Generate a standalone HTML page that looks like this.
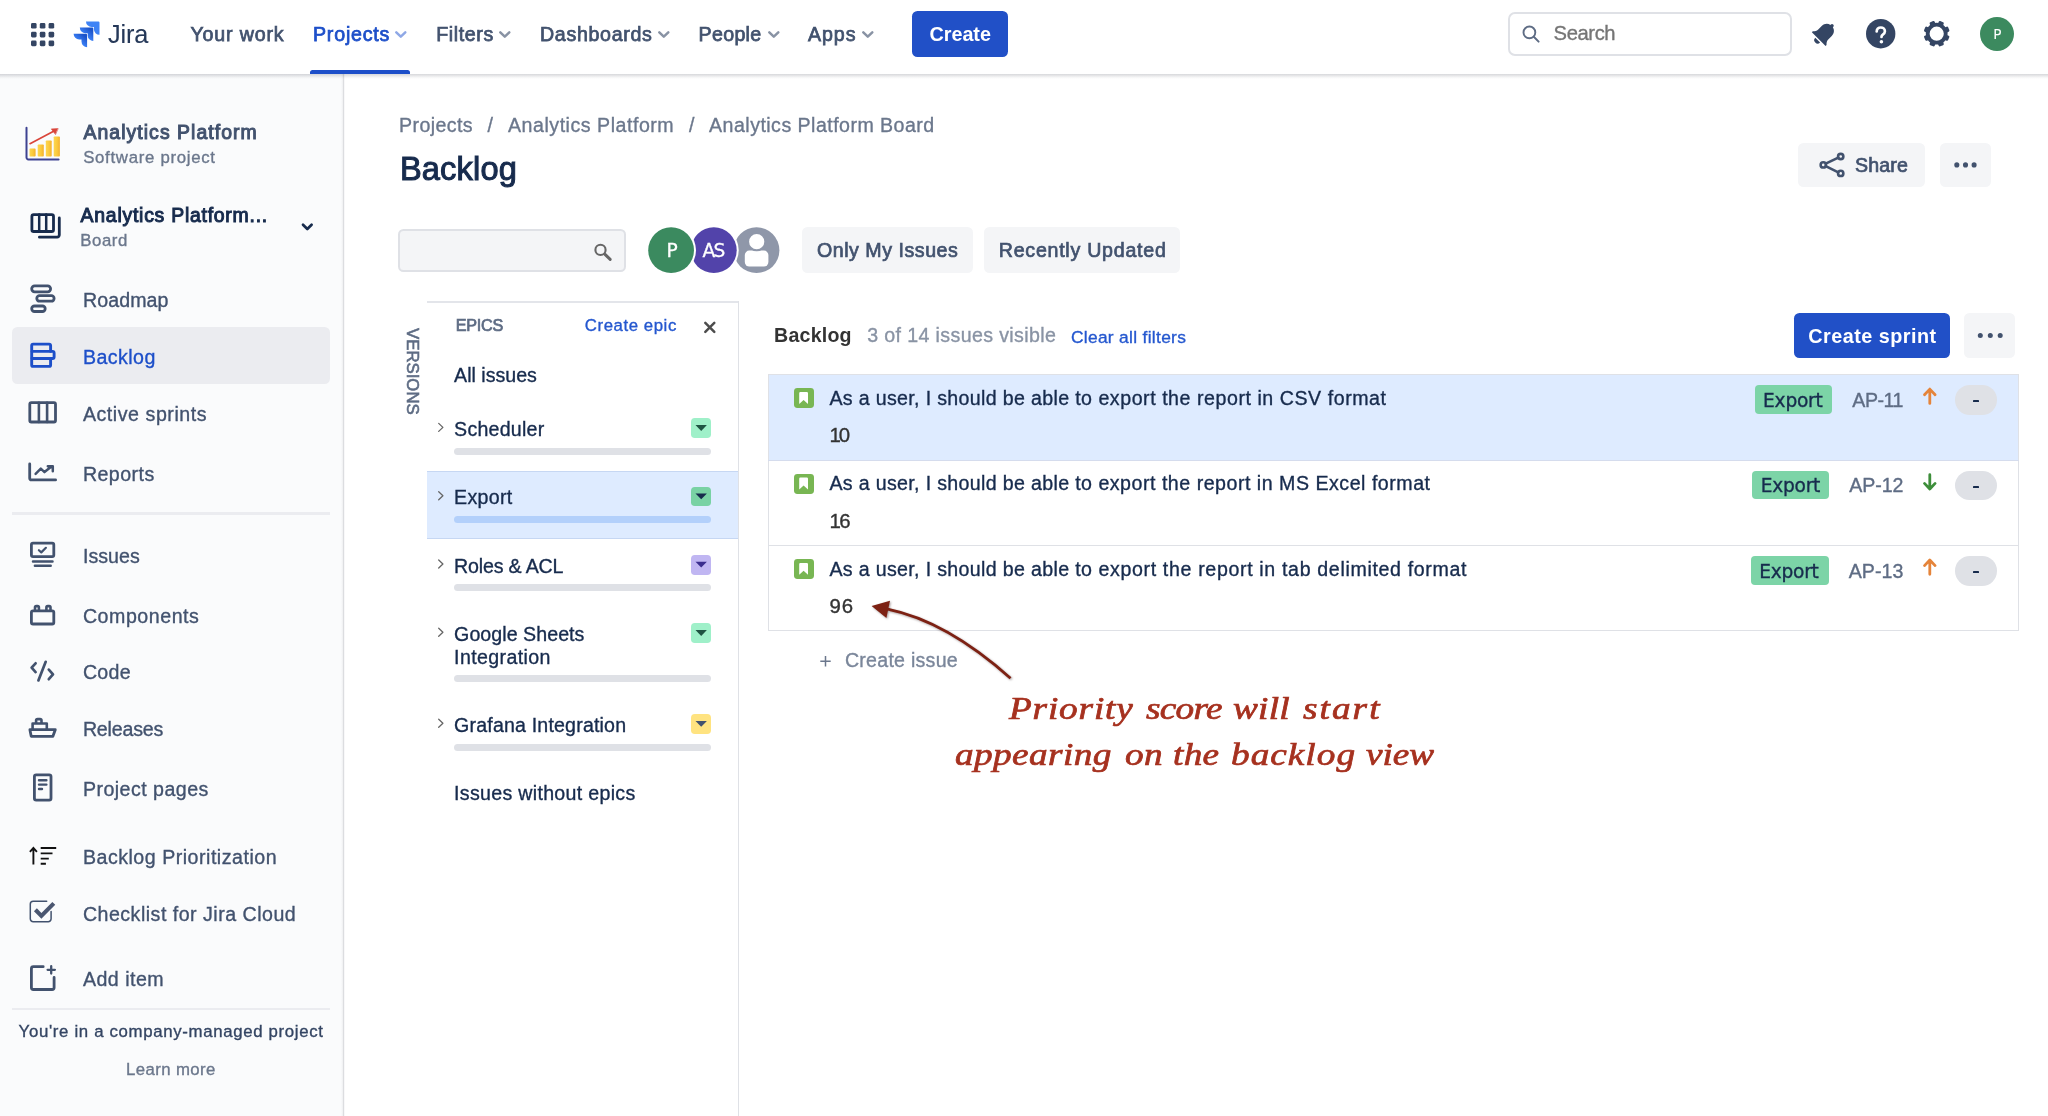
<!DOCTYPE html>
<html lang="en">
<head>
<meta charset="utf-8">
<title>Backlog - Analytics Platform - Jira</title>
<style>
*{box-sizing:border-box;margin:0;padding:0}
html,body{width:2048px;height:1116px;overflow:hidden;background:#fff}
body{font-family:"Liberation Sans",sans-serif;color:#172b4d;position:relative;font-size:20px}
.abs,.t{position:absolute;white-space:nowrap}
.t{line-height:1}
svg{position:absolute;overflow:visible}
#root{position:absolute;left:0;top:0;width:2048px;height:1116px;will-change:transform}
</style>
</head>
<body>
<div id="root">
<header id="top-navigation">
<div class="abs" style="left:0px;top:74px;width:343.2px;height:1042px;background:#fafbfc;"></div>
<div class="abs" style="left:340.8px;top:74px;width:2.2px;height:1042px;background:linear-gradient(90deg,rgba(40,40,50,0),rgba(40,40,50,.055));"></div>
<div class="abs" style="left:343px;top:74px;width:1.2px;height:1042px;background:#dcdde0;"></div>
<div class="abs" style="left:344.2px;top:74px;width:1.2px;height:1042px;background:rgba(40,40,50,.03);"></div>
<div class="abs" style="left:0px;top:74px;width:2048px;height:5px;background:linear-gradient(rgba(40,44,60,.19),rgba(40,44,60,.11) 35%,rgba(40,44,60,.035) 72%,rgba(40,44,60,0));"></div>
<div class="abs" style="left:0px;top:0px;width:2048px;height:74px;background:#fff;"></div>
<svg style="left:31px;top:22.8px" width="23.2" height="23.2" viewBox="0 0 23.2 23.2" fill="#344563"><rect x="0" y="0" width="5.6" height="5.6" rx="1.4"/><rect x="8.8" y="0" width="5.6" height="5.6" rx="1.4"/><rect x="17.6" y="0" width="5.6" height="5.6" rx="1.4"/><rect x="0" y="8.8" width="5.6" height="5.6" rx="1.4"/><rect x="8.8" y="8.8" width="5.6" height="5.6" rx="1.4"/><rect x="17.6" y="8.8" width="5.6" height="5.6" rx="1.4"/><rect x="0" y="17.6" width="5.6" height="5.6" rx="1.4"/><rect x="8.8" y="17.6" width="5.6" height="5.6" rx="1.4"/><rect x="17.6" y="17.6" width="5.6" height="5.6" rx="1.4"/></svg>
<svg style="left:72.9px;top:21px" width="26.6" height="26.4" viewBox="0 0 26.6 26.4" ><defs><linearGradient id="jg1" x1="0.9" y1="0.1" x2="0.45" y2="0.6"><stop offset="0.15" stop-color="#1c53c9"/><stop offset="1" stop-color="#3b80f6"/></linearGradient></defs>
<path d="M25.4 0.4H13.0a5.6 5.6 0 0 0 5.6 5.6h2.3v2.2a5.6 5.6 0 0 0 5.6 5.6V1.5a1.1 1.1 0 0 0-1.1-1.1z" fill="#3f83f5"/>
<path d="M19.2 6.6H6.8a5.6 5.6 0 0 0 5.6 5.6h2.3v2.2a5.6 5.6 0 0 0 5.6 5.6V7.7a1.1 1.1 0 0 0-1.1-1.1z" fill="url(#jg1)"/>
<path d="M13.0 12.8H0.6a5.6 5.6 0 0 0 5.6 5.6h2.3v2.2a5.6 5.6 0 0 0 5.6 5.6V13.9a1.1 1.1 0 0 0-1.1-1.1z" fill="url(#jg1)"/></svg>
<div class="t" style="left:108px;top:22.00px;font-size:25.3px;letter-spacing:-0.155px;color:#253858;-webkit-text-stroke-width:0.1px;">Jira</div>
<div class="t" style="left:190.5px;top:25.00px;font-size:19.6px;letter-spacing:0.837px;color:#42526e;-webkit-text-stroke-width:0.75px;">Your work</div>
<div class="t" style="left:313px;top:25.00px;font-size:19.6px;letter-spacing:0.803px;color:#1d4fc9;-webkit-text-stroke-width:0.75px;">Projects</div>
<svg style="left:395.4px;top:31.2px" width="11.6" height="7" viewBox="0 0 11.6 7" ><path d="M1.3 1.3L5.8 5.6L10.3 1.3" fill="none" stroke="#8fa8e6" stroke-width="2.5" stroke-linecap="round" stroke-linejoin="round"/></svg>
<div class="t" style="left:436.2px;top:25.00px;font-size:19.6px;letter-spacing:0.609px;color:#42526e;-webkit-text-stroke-width:0.75px;">Filters</div>
<svg style="left:499.3px;top:31.2px" width="11.6" height="7" viewBox="0 0 11.6 7" ><path d="M1.3 1.3L5.8 5.6L10.3 1.3" fill="none" stroke="#8993a4" stroke-width="2.5" stroke-linecap="round" stroke-linejoin="round"/></svg>
<div class="t" style="left:540px;top:25.00px;font-size:19.6px;letter-spacing:0.683px;color:#42526e;-webkit-text-stroke-width:0.75px;">Dashboards</div>
<svg style="left:658.3px;top:31.2px" width="11.6" height="7" viewBox="0 0 11.6 7" ><path d="M1.3 1.3L5.8 5.6L10.3 1.3" fill="none" stroke="#8993a4" stroke-width="2.5" stroke-linecap="round" stroke-linejoin="round"/></svg>
<div class="t" style="left:698.6px;top:25.00px;font-size:19.6px;letter-spacing:0.317px;color:#42526e;-webkit-text-stroke-width:0.75px;">People</div>
<svg style="left:767.9px;top:31.2px" width="11.6" height="7" viewBox="0 0 11.6 7" ><path d="M1.3 1.3L5.8 5.6L10.3 1.3" fill="none" stroke="#8993a4" stroke-width="2.5" stroke-linecap="round" stroke-linejoin="round"/></svg>
<div class="t" style="left:808px;top:25.00px;font-size:19.6px;letter-spacing:0.943px;color:#42526e;-webkit-text-stroke-width:0.75px;">Apps</div>
<svg style="left:861.9px;top:31.2px" width="11.6" height="7" viewBox="0 0 11.6 7" ><path d="M1.3 1.3L5.8 5.6L10.3 1.3" fill="none" stroke="#8993a4" stroke-width="2.5" stroke-linecap="round" stroke-linejoin="round"/></svg>
<div class="abs" style="left:310px;top:69.7px;width:99.5px;height:4.3px;background:#1d4fc9;border-radius:2.5px 2.5px 0 0;"></div>
<div class="abs" style="left:911.8px;top:11.4px;width:96.3px;height:45.3px;background:#2150c7;border-radius:5.5px;"></div>
<div class="t" style="left:929.5px;top:25.00px;font-size:19.8px;font-weight:700;letter-spacing:-0.036px;color:#fff;">Create</div>
<div class="abs" style="left:1508px;top:11.7px;width:283.5px;height:44px;border:2px solid #dfe1e6;border-radius:7px;background:#fff"></div>
<svg style="left:1521.6px;top:24.8px" width="18" height="18" viewBox="0 0 18 18" ><circle cx="7.4" cy="7.4" r="5.9" fill="none" stroke="#5e6c84" stroke-width="1.9"/><path d="M11.8 11.8L16.6 16.6" stroke="#5e6c84" stroke-width="2" stroke-linecap="round"/></svg>
<div class="t" style="left:1553.6px;top:23.00px;font-size:20.2px;letter-spacing:-0.394px;color:#757575;-webkit-text-stroke-width:0.35px;">Search</div>
<svg style="left:0;top:0" width="2048" height="74"><g transform="translate(1824.600 33.200) rotate(45)" fill="#344563"><path d="M0 -12.2a1.7 1.7 0 0 1 1.7 1.7v.5c3.400 .8 5.400 3.700 5.400 7v5.300c0 1.700 .9 3 2.600 4.700v1.300h-19.400v-1.300c1.700-1.700 2.600-3 2.600-4.700v-5.300c0-3.300 2-6.200 5.400-7v-.5a1.700 1.700 0 0 1 1.700-1.700z"/><path d="M-3.400 9.800h6.800a3.400 3.400 0 0 1-6.800 0z"/></g></svg>
<svg style="left:1865.6px;top:19.2px" width="29.4" height="29.4" viewBox="0 0 29.4 29.4" ><circle cx="14.7" cy="14.7" r="14.7" fill="#344563"/><path d="M10.700 12.400c0-2.300 1.800-3.900 4.100-3.900s4.100 1.500 4.100 3.700c0 1.700-.9 2.600-2.100 3.400-1 .7-1.300 1.100-1.300 2.400" fill="none" stroke="#fff" stroke-width="2.700" stroke-linecap="round"/><circle cx="15.400" cy="22.700" r="1.800" fill="#fff"/></svg>
<svg style="left:0;top:0" width="2048" height="74"><g transform="translate(1936.7 33.700)"><g fill="#344563"><rect x="-2.7" y="-13" width="5.400" height="5" rx="1.2" transform="rotate(22.5)"/><rect x="-2.7" y="-13" width="5.400" height="5" rx="1.2" transform="rotate(67.5)"/><rect x="-2.7" y="-13" width="5.400" height="5" rx="1.2" transform="rotate(112.5)"/><rect x="-2.7" y="-13" width="5.400" height="5" rx="1.2" transform="rotate(157.5)"/><rect x="-2.7" y="-13" width="5.400" height="5" rx="1.2" transform="rotate(202.5)"/><rect x="-2.7" y="-13" width="5.400" height="5" rx="1.2" transform="rotate(247.5)"/><rect x="-2.7" y="-13" width="5.400" height="5" rx="1.2" transform="rotate(292.5)"/><rect x="-2.7" y="-13" width="5.400" height="5" rx="1.2" transform="rotate(337.5)"/></g><circle r="9" fill="none" stroke="#344563" stroke-width="3.800"/></g></svg>
<div class="abs" style="left:1979.8px;top:17px;width:34.3px;height:34.3px;border-radius:50%;background:#3c8a5f"></div>
<div class="t" style="left:1993.3px;top:28.00px;font-size:13.6px;font-family:'DejaVu Sans',sans-serif;color:#fff;-webkit-text-stroke-width:0.05px;">P</div>
</header>
<aside id="project-sidebar">
<svg style="left:0;top:0" width="344" height="1116" fill="none" stroke="#42526e" stroke-width="2.8" stroke-linecap="round" stroke-linejoin="round"><defs><linearGradient id="yb" x1="0" y1="0" x2="1" y2="0"><stop offset="0" stop-color="#fcd650"/><stop offset="0.55" stop-color="#fbc93c"/><stop offset="1" stop-color="#f3b02e"/></linearGradient></defs>
<path d="M26.500 127.800V157.500a1.900 1.900 0 0 0 1.900 1.900H58.600" stroke="#3d4291" stroke-width="2"/>
<g fill="url(#yb)" stroke="none"><rect x="29.500" y="148.600" width="6.100" height="7.900" rx=".8"/><rect x="37.700" y="144.400" width="6.100" height="12.100" rx=".8"/><rect x="45.800" y="140.400" width="5.900" height="16.100" rx=".8"/><rect x="53.700" y="136.500" width="6.200" height="20" rx=".8"/></g>
<path d="M30 143.700L55 130.600" stroke="#d9453a" stroke-width="1.700"/><path d="M57.800 128.600L51.300 128.900L55.300 134.300z" fill="#d9453a" stroke="#d9453a" stroke-width=".6"/></svg>
<div class="t" style="left:83.5px;top:123.00px;font-size:19.4px;letter-spacing:1.060px;color:#42526e;-webkit-text-stroke-width:1px;">Analytics Platform</div>
<div class="t" style="left:83.2px;top:150.00px;font-size:16.8px;letter-spacing:0.702px;color:#6b778c;-webkit-text-stroke-width:0.35px;">Software project</div>
<svg style="left:0;top:0" width="344" height="1116" fill="none" stroke="#172b4d" stroke-width="2.8" stroke-linecap="round" stroke-linejoin="round"><rect x="31.900" y="214.600" width="21.600" height="16.900" rx="1.800"/><path d="M39.200 214.600v16.900M46.200 214.600v16.900" stroke-width="2.500"/><path d="M59.300 218v17.100a2.100 2.100 0 0 1-2.100 2.100H39.400"/></svg>
<div class="t" style="left:80.6px;top:206.00px;font-size:19.4px;letter-spacing:0.763px;color:#172b4d;-webkit-text-stroke-width:1px;">Analytics Platform...</div>
<div class="t" style="left:80.3px;top:233.00px;font-size:16.8px;letter-spacing:0.555px;color:#6b778c;-webkit-text-stroke-width:0.35px;">Board</div>
<svg style="left:0;top:0" width="344" height="1116" fill="none" stroke="#172b4d" stroke-width="2.7" stroke-linecap="round" stroke-linejoin="round"><path d="M303 224.700l4.300 4.300 4.300-4.300"/></svg>
<div class="abs" style="left:11.6px;top:327.1px;width:318.2px;height:56.5px;background:#ebecf0;border-radius:5.5px;"></div>
<svg style="left:0;top:0" width="344" height="1116" fill="none" stroke="#42526e" stroke-width="2.8" stroke-linecap="round" stroke-linejoin="round"><rect x="31.700" y="285.900" width="18.900" height="5.900" rx="2.950"/><rect x="36.800" y="295.700" width="17.300" height="5.500" rx="2.750"/><rect x="31.700" y="306" width="13.500" height="5.500" rx="2.750"/></svg>
<div class="t" style="left:82.9px;top:291.00px;font-size:19.6px;letter-spacing:0.105px;color:#42526e;-webkit-text-stroke-width:0.35px;">Roadmap</div>
<svg style="left:0;top:0" width="344" height="1116" fill="none" stroke="#1d4fc9" stroke-width="2.9" stroke-linecap="round" stroke-linejoin="round"><path d="M31.700 351.400V345.600a1.500 1.500 0 0 1 1.500-1.500H49.100a1.500 1.500 0 0 1 1.500 1.500V351.400M31.700 358.500V364.900a1.500 1.500 0 0 0 1.500 1.500H49.100a1.500 1.500 0 0 0 1.500-1.500V358.500"/><rect x="31.700" y="351.400" width="22.400" height="7.100" rx="1.500"/></svg>
<div class="t" style="left:82.9px;top:348.00px;font-size:19.6px;letter-spacing:0.447px;color:#1d4fc9;-webkit-text-stroke-width:0.35px;">Backlog</div>
<svg style="left:0;top:0" width="344" height="1116" fill="none" stroke="#42526e" stroke-width="2.8" stroke-linecap="round" stroke-linejoin="round"><rect x="29.800" y="402.700" width="25.700" height="19.300" rx="1.500"/><path d="M38.900 402.700v19.300M47.100 402.700v19.300" stroke-width="2.600"/></svg>
<div class="t" style="left:82.9px;top:405.00px;font-size:19.6px;letter-spacing:0.553px;color:#42526e;-webkit-text-stroke-width:0.35px;">Active sprints</div>
<svg style="left:0;top:0" width="344" height="1116" fill="none" stroke="#42526e" stroke-width="2.8" stroke-linecap="round" stroke-linejoin="round"><path d="M29.700 464v14.200a1.700 1.700 0 0 0 1.700 1.700h24.200"/><path d="M35.600 473.800l5.200-5.200 3.700 3.500 7.300-5.800M47.800 466.300h5v5" stroke-width="2.500"/></svg>
<div class="t" style="left:82.9px;top:465.00px;font-size:19.6px;letter-spacing:0.448px;color:#42526e;-webkit-text-stroke-width:0.35px;">Reports</div>
<div class="abs" style="left:11.6px;top:512.4px;width:318.2px;height:2.2px;background:#ebecf0;"></div>
<svg style="left:0;top:0" width="344" height="1116" fill="none" stroke="#42526e" stroke-width="2.8" stroke-linecap="round" stroke-linejoin="round"><rect x="31.400" y="543.200" width="22.400" height="13.400" rx="1.600"/><path d="M38.900 550.200l2.400 2.200 4.600-4.600" stroke-width="2.200"/><path d="M33 561.500h19.500M34.900 565.700h15.800" stroke-width="2.500"/></svg>
<div class="t" style="left:82.9px;top:547.00px;font-size:19.6px;letter-spacing:0.052px;color:#42526e;-webkit-text-stroke-width:0.35px;">Issues</div>
<svg style="left:0;top:0" width="344" height="1116" fill="none" stroke="#42526e" stroke-width="2.8" stroke-linecap="round" stroke-linejoin="round"><rect x="31.400" y="610.800" width="22.400" height="13.200" rx="1.600"/><path d="M35 610.600v-3.200a1.300 1.300 0 0 1 1.300-1.300h1.300a1.300 1.300 0 0 1 1.300 1.300v3.200M46.400 610.600v-3.200a1.300 1.300 0 0 1 1.300-1.300h1.500a1.300 1.300 0 0 1 1.300 1.300v3.200" stroke-width="2.600"/></svg>
<div class="t" style="left:82.9px;top:607.00px;font-size:19.6px;letter-spacing:0.543px;color:#42526e;-webkit-text-stroke-width:0.35px;">Components</div>
<svg style="left:0;top:0" width="344" height="1116" fill="none" stroke="#42526e" stroke-width="2.8" stroke-linecap="round" stroke-linejoin="round"><path d="M35.600 663.300l-4 4.400 4 4.400M48.800 669.600l4.200 4.800-4.200 4.800M45.700 661.800l-7.300 18.600" stroke-width="2.700"/></svg>
<div class="t" style="left:82.9px;top:663.00px;font-size:19.6px;letter-spacing:0.285px;color:#42526e;-webkit-text-stroke-width:0.35px;">Code</div>
<svg style="left:0;top:0" width="344" height="1116" fill="none" stroke="#42526e" stroke-width="2.8" stroke-linecap="round" stroke-linejoin="round"><path d="M29.900 729.700h25.400l-2.400 6.600H31.200z"/><path d="M32.600 729.500v-6h14.200v6M36.100 723.300v-2.700a1.500 1.500 0 0 1 1.500-1.500h2.400a1.500 1.500 0 0 1 1.500 1.500v2.700" stroke-width="2.600"/></svg>
<div class="t" style="left:82.9px;top:720.00px;font-size:19.6px;letter-spacing:-0.170px;color:#42526e;-webkit-text-stroke-width:0.35px;">Releases</div>
<svg style="left:0;top:0" width="344" height="1116" fill="none" stroke="#42526e" stroke-width="2.8" stroke-linecap="round" stroke-linejoin="round"><rect x="34.400" y="774.800" width="16.600" height="25.300" rx="1.800"/><path d="M39 780.300h7.400M39 784.600h7.400M39 789h3" stroke-width="2.400"/></svg>
<div class="t" style="left:82.9px;top:780.00px;font-size:19.6px;letter-spacing:0.466px;color:#42526e;-webkit-text-stroke-width:0.35px;">Project pages</div>
<svg style="left:0;top:0" width="344" height="1116" fill="none" stroke="#111" stroke-width="1.9" stroke-linecap="round" stroke-linejoin="round"><path d="M33.400 848.300v16.200M29.900 851.800l3.500-3.900 3.500 3.900" stroke-linecap="butt" stroke-linejoin="miter"/><path d="M40.700 848h15.500M40.700 853.400h11.800M40.700 858.600h8.100M40.700 863.800h5.200" stroke-linecap="butt"/></svg>
<div class="t" style="left:82.9px;top:848.00px;font-size:19.6px;letter-spacing:0.511px;color:#42526e;-webkit-text-stroke-width:0.35px;">Backlog Prioritization</div>
<svg style="left:0;top:0" width="344" height="1116" fill="none" stroke="#42526e" stroke-width="2.8" stroke-linecap="round" stroke-linejoin="round"><path d="M51.100 911.500v7.300a2.900 2.900 0 0 1-2.900 2.900H33.200a2.900 2.900 0 0 1-2.900-2.900V904.100a2.900 2.900 0 0 1 2.900-2.900h13.500" stroke-width="1.500"/><path d="M35.400 909.800l6 6.100 12.400-12.500" stroke-width="4.100" stroke-linejoin="miter" stroke-linecap="butt" stroke="#4a5670"/></svg>
<div class="t" style="left:82.9px;top:905.00px;font-size:19.6px;letter-spacing:0.493px;color:#42526e;-webkit-text-stroke-width:0.35px;">Checklist for Jira Cloud</div>
<svg style="left:0;top:0" width="344" height="1116" fill="none" stroke="#42526e" stroke-width="2.8" stroke-linecap="round" stroke-linejoin="round"><path d="M54.100 977.500v10a2 2 0 0 1-2 2H33.400a2 2 0 0 1-2-2V968.700a2 2 0 0 1 2-2h9.800"/><path d="M51.200 966.200v7.300M47.600 969.800h7.300" stroke-width="2.300"/></svg>
<div class="t" style="left:82.9px;top:970.00px;font-size:19.6px;letter-spacing:0.482px;color:#42526e;-webkit-text-stroke-width:0.35px;">Add item</div>
<div class="abs" style="left:11.6px;top:1007.5px;width:318.2px;height:2.1px;background:#ebecf0;"></div>
<div class="t" style="left:18.6px;top:1024.00px;font-size:16.8px;letter-spacing:0.673px;color:#344563;-webkit-text-stroke-width:0.35px;">You're in a company-managed project</div>
<div class="t" style="left:126px;top:1062.00px;font-size:16.8px;letter-spacing:0.386px;color:#6b778c;-webkit-text-stroke-width:0.35px;">Learn more</div>
</aside>
<section id="page-header">
<div class="t" style="left:399px;top:116.00px;font-size:19.6px;letter-spacing:0.403px;color:#6b778c;-webkit-text-stroke-width:0.35px;">Projects</div>
<div class="t" style="left:487.6px;top:116.00px;font-size:19.6px;color:#6b778c;-webkit-text-stroke-width:0.35px;">/</div>
<div class="t" style="left:508px;top:116.00px;font-size:19.6px;letter-spacing:0.523px;color:#6b778c;-webkit-text-stroke-width:0.35px;">Analytics Platform</div>
<div class="t" style="left:688.9px;top:116.00px;font-size:19.6px;color:#6b778c;-webkit-text-stroke-width:0.35px;">/</div>
<div class="t" style="left:709.1px;top:116.00px;font-size:19.6px;letter-spacing:0.460px;color:#6b778c;-webkit-text-stroke-width:0.35px;">Analytics Platform Board</div>
<div class="t" style="left:399.9px;top:153.00px;font-size:32.6px;letter-spacing:0.182px;color:#172b4d;-webkit-text-stroke-width:1.05px;">Backlog</div>
<div class="abs" style="left:1798px;top:142.5px;width:127.4px;height:44.8px;background:#f4f5f7;border-radius:5.5px;"></div>
<svg style="left:0;top:0" width="2048" height="300" fill="none" stroke="#42526e" stroke-width="2.600" stroke-linecap="round"><path d="M1825.700 163.700L1838.300 157.600M1825.700 166.100L1838.300 172.300"/><circle cx="1823.300" cy="164.900" r="2.650"/><circle cx="1840.700" cy="156.500" r="2.650"/><circle cx="1840.700" cy="173.400" r="2.650"/></svg>
<div class="t" style="left:1855px;top:156.00px;font-size:19.6px;letter-spacing:0.151px;color:#42526e;-webkit-text-stroke-width:0.7px;">Share</div>
<div class="abs" style="left:1940.1px;top:142.5px;width:51.1px;height:44.8px;background:#f4f5f7;border-radius:5.5px;"></div>
<svg style="left:0;top:0" width="2048" height="300" fill="#42526e"><circle cx="1956.800" cy="164.900" r="2.550"/><circle cx="1965.500" cy="164.900" r="2.550"/><circle cx="1974.100" cy="164.900" r="2.550"/></svg>
<div class="abs" style="left:398.400px;top:229px;width:227.200px;height:42.500px;border:2px solid #dfe1e6;border-radius:5.500px;background:#f4f5f7"></div>
<svg style="left:0;top:0" width="2048" height="300" fill="none" stroke="#666" stroke-linecap="round"><circle cx="600.500" cy="249.900" r="5.100" stroke-width="2.100"/><path d="M605 254.400L610.200 259.400" stroke-width="3"/></svg>
<svg style="left:0;top:0" width="2048" height="300"><circle cx="756.500" cy="250.200" r="22.900" fill="#8f97a9"/><rect x="744.800" y="250.600" width="23.600" height="16" rx="4.500" fill="#fff"/><circle cx="756.700" cy="241.700" r="8.600" fill="#fff" stroke="#8f97a9" stroke-width="2"/><circle cx="713.800" cy="250.200" r="24.900" fill="#fff"/><circle cx="713.800" cy="250.200" r="22.900" fill="#5243aa"/><circle cx="671.100" cy="250.200" r="24.900" fill="#fff"/><circle cx="671.100" cy="250.200" r="22.900" fill="#3b8a5f"/></svg>
<div class="t" style="left:666.4px;top:242.00px;font-size:18.6px;font-family:'DejaVu Sans',sans-serif;color:#fff;-webkit-text-stroke-width:0.3px;">P</div>
<div class="t" style="left:702.5px;top:242.00px;font-size:18.6px;font-family:'DejaVu Sans',sans-serif;letter-spacing:-1.731px;color:#fff;-webkit-text-stroke-width:0.3px;">AS</div>
<div class="abs" style="left:802px;top:227.4px;width:170.8px;height:45.7px;background:#f4f5f7;border-radius:5.5px;"></div>
<div class="t" style="left:817px;top:241.00px;font-size:19.6px;letter-spacing:0.528px;color:#42526e;-webkit-text-stroke-width:0.7px;">Only My Issues</div>
<div class="abs" style="left:984.2px;top:227.4px;width:195.8px;height:45.7px;background:#f4f5f7;border-radius:5.5px;"></div>
<div class="t" style="left:998.8px;top:241.00px;font-size:19.6px;letter-spacing:0.749px;color:#42526e;-webkit-text-stroke-width:0.7px;">Recently Updated</div>
</section>
<section id="epics-panel">
<div class="abs" style="left:426.8px;top:300.9px;width:312.7px;height:1.8px;background:#e3e5ea;"></div>
<div class="abs" style="left:737.6px;top:300.8px;width:1.9px;height:815.2px;background:#dfe1e6;"></div>
<div class="t" style="left:419.600px;top:327.600px;font-size:16.800px;letter-spacing:0;color:#5e6c84;-webkit-text-stroke-width:.6px;transform-origin:0 0;transform:rotate(90deg)">VERSIONS</div>
<div class="t" style="left:455.8px;top:317.00px;font-size:16.2px;letter-spacing:-0.273px;color:#5e6c84;-webkit-text-stroke-width:0.7px;">EPICS</div>
<div class="t" style="left:584.8px;top:318.00px;font-size:16.8px;letter-spacing:0.567px;color:#2457cf;-webkit-text-stroke-width:0.35px;">Create epic</div>
<svg style="left:0;top:0" width="2048" height="400" fill="none" stroke="#4d4d4d" stroke-width="2.500" stroke-linecap="round"><path d="M705.300 322.800L714.300 331.800M714.300 322.800L705.300 331.800"/></svg>
<div class="t" style="left:454.1px;top:366.00px;font-size:19.6px;letter-spacing:0.004px;color:#172b4d;-webkit-text-stroke-width:0.35px;">All issues</div>
<svg style="left:0;top:0" width="2048" height="900" fill="none" stroke="#666" stroke-width="1.300" stroke-linecap="round" stroke-linejoin="round"><path d="M438.700 423.4L442.900 427.4L438.700 431.4"/></svg>
<div class="t" style="left:454.1px;top:420.00px;font-size:19.6px;letter-spacing:0.233px;color:#172b4d;-webkit-text-stroke-width:0.35px;">Scheduler</div>
<div class="abs" style="left:690.8px;top:418.3px;width:20.6px;height:19.8px;background:#9ff0c9;border-radius:3.8px;"></div>
<svg style="left:0;top:0" width="2048" height="900"><path d="M695.500 425.1h11.400l-5.700 5.900z" fill="#1f5443"/></svg>
<div class="abs" style="left:453.6px;top:447.8px;width:257.8px;height:7.1px;background:#dfe1e6;border-radius:3.6px;"></div>
<div class="abs" style="left:426.8px;top:471px;width:311px;height:67.6px;background:#deebff;border-top:1.500px solid #c6d7f3;border-bottom:1.500px solid #c6d7f3;"></div>
<svg style="left:0;top:0" width="2048" height="900" fill="none" stroke="#666" stroke-width="1.300" stroke-linecap="round" stroke-linejoin="round"><path d="M438.700 491.7L442.900 495.7L438.700 499.7"/></svg>
<div class="t" style="left:454.1px;top:488.00px;font-size:19.6px;letter-spacing:0.292px;color:#172b4d;-webkit-text-stroke-width:0.35px;">Export</div>
<div class="abs" style="left:690.8px;top:486.6px;width:20.6px;height:19.8px;background:#79d2a4;border-radius:3.8px;"></div>
<svg style="left:0;top:0" width="2048" height="900"><path d="M695.500 493.4h11.400l-5.700 5.900z" fill="#172b4d"/></svg>
<div class="abs" style="left:453.6px;top:516px;width:257.8px;height:7.1px;background:#b3d0fb;border-radius:3.6px;"></div>
<svg style="left:0;top:0" width="2048" height="900" fill="none" stroke="#666" stroke-width="1.300" stroke-linecap="round" stroke-linejoin="round"><path d="M438.700 560.0L442.900 564.0L438.700 568.0"/></svg>
<div class="t" style="left:454.1px;top:557.00px;font-size:19.6px;letter-spacing:-0.179px;color:#172b4d;-webkit-text-stroke-width:0.35px;">Roles &amp; ACL</div>
<div class="abs" style="left:690.8px;top:554.9px;width:20.6px;height:19.8px;background:#c0b6f2;border-radius:3.8px;"></div>
<svg style="left:0;top:0" width="2048" height="900"><path d="M695.500 561.7h11.400l-5.700 5.900z" fill="#3b2e8f"/></svg>
<div class="abs" style="left:453.6px;top:584.3px;width:257.8px;height:7.1px;background:#dfe1e6;border-radius:3.6px;"></div>
<svg style="left:0;top:0" width="2048" height="900" fill="none" stroke="#666" stroke-width="1.300" stroke-linecap="round" stroke-linejoin="round"><path d="M438.700 628.3L442.900 632.3L438.700 636.3"/></svg>
<div class="t" style="left:454.1px;top:625.00px;font-size:19.6px;letter-spacing:0.055px;color:#172b4d;-webkit-text-stroke-width:0.35px;">Google Sheets</div>
<div class="t" style="left:454.1px;top:648.00px;font-size:19.6px;letter-spacing:0.381px;color:#172b4d;-webkit-text-stroke-width:0.35px;">Integration</div>
<div class="abs" style="left:690.8px;top:623.2px;width:20.6px;height:19.8px;background:#9ff0c9;border-radius:3.8px;"></div>
<svg style="left:0;top:0" width="2048" height="900"><path d="M695.500 630.0h11.400l-5.700 5.900z" fill="#1f5443"/></svg>
<div class="abs" style="left:453.6px;top:675.2px;width:257.8px;height:7.1px;background:#dfe1e6;border-radius:3.6px;"></div>
<svg style="left:0;top:0" width="2048" height="900" fill="none" stroke="#666" stroke-width="1.300" stroke-linecap="round" stroke-linejoin="round"><path d="M438.700 719.2L442.900 723.2L438.700 727.2"/></svg>
<div class="t" style="left:454.1px;top:716.00px;font-size:19.6px;letter-spacing:0.175px;color:#172b4d;-webkit-text-stroke-width:0.35px;">Grafana Integration</div>
<div class="abs" style="left:690.8px;top:714.1px;width:20.6px;height:19.8px;background:#ffe380;border-radius:3.8px;"></div>
<svg style="left:0;top:0" width="2048" height="900"><path d="M695.500 720.9h11.400l-5.700 5.900z" fill="#42526e"/></svg>
<div class="abs" style="left:453.6px;top:743.8px;width:257.8px;height:7.1px;background:#dfe1e6;border-radius:3.6px;"></div>
<div class="t" style="left:454.1px;top:784.00px;font-size:19.6px;letter-spacing:0.303px;color:#172b4d;-webkit-text-stroke-width:0.35px;">Issues without epics</div>
</section>
<main id="backlog-list">
<div class="t" style="left:774.1px;top:326.00px;font-size:19.6px;font-weight:700;letter-spacing:0.211px;color:#333;">Backlog</div>
<div class="t" style="left:867.2px;top:326.00px;font-size:19.6px;letter-spacing:0.376px;color:#8993a4;-webkit-text-stroke-width:0.35px;">3 of 14 issues visible</div>
<div class="t" style="left:1070.9px;top:329.00px;font-size:17.4px;letter-spacing:0.302px;color:#2457cf;-webkit-text-stroke-width:0.35px;">Clear all filters</div>
<div class="abs" style="left:1793.5px;top:312.8px;width:156.3px;height:45.1px;background:#2150c7;border-radius:5.5px;"></div>
<div class="t" style="left:1808.2px;top:327.00px;font-size:19.8px;font-weight:700;letter-spacing:0.489px;color:#fff;">Create sprint</div>
<div class="abs" style="left:1964.2px;top:312.8px;width:50.5px;height:45.1px;background:#f4f5f7;border-radius:5.5px;"></div>
<svg style="left:0;top:0" width="2048" height="400" fill="#42526e"><circle cx="1980.300" cy="335.600" r="2.500"/><circle cx="1990.300" cy="335.600" r="2.500"/><circle cx="2000.200" cy="335.600" r="2.500"/></svg>
<div class="abs" style="left:768px;top:374.4px;width:1251.2px;height:86.2px;background:#deebff;"></div>
<div class="abs" style="left:768px;top:373.800px;width:1251.200px;height:257.300px;border:1.500px solid #dfe1e6"></div>
<div class="abs" style="left:768px;top:459.6px;width:1251.2px;height:1.5px;background:#d5dced;"></div>
<div class="abs" style="left:768px;top:544.7px;width:1251.2px;height:1.5px;background:#dfe1e6;"></div>
<div class="abs" style="left:793.7px;top:388px;width:19.9px;height:20px;background:#78b653;border-radius:3.4px;"></div>
<svg style="left:0;top:0" width="2048" height="700"><path d="M799.200 393.2a1.200 1.200 0 0 1 1.200-1.200h6.400a1.200 1.200 0 0 1 1.200 1.200v10.700l-4.400-4-4.400 4z" fill="#fff"/></svg>
<div class="t" style="left:829.4px;top:389.00px;font-size:19.6px;letter-spacing:0.337px;color:#172b4d;-webkit-text-stroke-width:0.35px;">As a user, I should be able to</div>
<div class="t" style="left:1098.4px;top:389.00px;font-size:19.6px;letter-spacing:0.548px;color:#172b4d;-webkit-text-stroke-width:0.35px;">export the report in CSV format</div>
<div class="t" style="left:829.4px;top:425.00px;font-size:20.4px;letter-spacing:-2.087px;color:#333;-webkit-text-stroke-width:0.35px;">10</div>
<div class="abs" style="left:1754.8px;top:385.3px;width:76.8px;height:28.4px;background:#7cd4a7;border-radius:4px;"></div>
<div class="t" style="left:1763.1px;top:392.00px;font-size:18.6px;font-family:'DejaVu Sans','Liberation Sans',sans-serif;letter-spacing:-0.235px;color:#172b4d;-webkit-text-stroke-width:0.35px;">Export</div>
<div class="t" style="left:1852.3px;top:391.00px;font-size:19.6px;letter-spacing:-0.454px;color:#5e6c84;-webkit-text-stroke-width:0.35px;">AP-11</div>
<svg style="left:0;top:0" width="2048" height="700" fill="none" stroke="#e5843a" stroke-width="2.800" stroke-linecap="round" stroke-linejoin="round"><path d="M1929.8 403.4V389.3M1924.5 394.7L1929.8 389.1L1935.1 394.7"/></svg>
<div class="abs" style="left:1955.4px;top:385.1px;width:41.3px;height:29.8px;background:#dfe1e6;border-radius:14.9px;"></div>
<div class="abs" style="left:1973.4px;top:400px;width:5.8px;height:2.4px;background:#172b4d;border-radius:0.6px;"></div>
<div class="abs" style="left:793.7px;top:473.6px;width:19.9px;height:20px;background:#78b653;border-radius:3.4px;"></div>
<svg style="left:0;top:0" width="2048" height="700"><path d="M799.200 478.8a1.200 1.200 0 0 1 1.200-1.200h6.400a1.200 1.200 0 0 1 1.200 1.200v10.700l-4.400-4-4.400 4z" fill="#fff"/></svg>
<div class="t" style="left:829.4px;top:474.00px;font-size:19.6px;letter-spacing:0.337px;color:#172b4d;-webkit-text-stroke-width:0.35px;">As a user, I should be able to</div>
<div class="t" style="left:1098.4px;top:474.00px;font-size:19.6px;letter-spacing:0.514px;color:#172b4d;-webkit-text-stroke-width:0.35px;">export the report in MS Excel format</div>
<div class="t" style="left:829.4px;top:511.00px;font-size:20.4px;letter-spacing:-1.487px;color:#333;-webkit-text-stroke-width:0.35px;">16</div>
<div class="abs" style="left:1752.4px;top:470.9px;width:76.5px;height:28.4px;background:#7cd4a7;border-radius:4px;"></div>
<div class="t" style="left:1760.7px;top:477.00px;font-size:18.6px;font-family:'DejaVu Sans','Liberation Sans',sans-serif;letter-spacing:-0.235px;color:#172b4d;-webkit-text-stroke-width:0.35px;">Export</div>
<div class="t" style="left:1849.3px;top:476.00px;font-size:19.6px;letter-spacing:-0.067px;color:#5e6c84;-webkit-text-stroke-width:0.35px;">AP-12</div>
<svg style="left:0;top:0" width="2048" height="700" fill="none" stroke="#3d8e3a" stroke-width="2.800" stroke-linecap="round" stroke-linejoin="round"><path d="M1929.8 474.7V488.8M1924.5 483.4L1929.8 489.0L1935.1 483.4"/></svg>
<div class="abs" style="left:1955.4px;top:470.7px;width:41.3px;height:29.8px;background:#dfe1e6;border-radius:14.9px;"></div>
<div class="abs" style="left:1973.4px;top:485.6px;width:5.8px;height:2.4px;background:#172b4d;border-radius:0.6px;"></div>
<div class="abs" style="left:793.7px;top:558.9px;width:19.9px;height:20px;background:#78b653;border-radius:3.4px;"></div>
<svg style="left:0;top:0" width="2048" height="700"><path d="M799.200 564.1a1.200 1.200 0 0 1 1.200-1.200h6.400a1.200 1.200 0 0 1 1.200 1.200v10.700l-4.400-4-4.400 4z" fill="#fff"/></svg>
<div class="t" style="left:829.4px;top:560.00px;font-size:19.6px;letter-spacing:0.337px;color:#172b4d;-webkit-text-stroke-width:0.35px;">As a user, I should be able to</div>
<div class="t" style="left:1098.4px;top:560.00px;font-size:19.6px;letter-spacing:0.653px;color:#172b4d;-webkit-text-stroke-width:0.35px;">export the report in tab delimited format</div>
<div class="t" style="left:829.4px;top:596.00px;font-size:20.4px;letter-spacing:1.013px;color:#333;-webkit-text-stroke-width:0.35px;">96</div>
<div class="abs" style="left:1750.9px;top:556.2px;width:78px;height:28.4px;background:#7cd4a7;border-radius:4px;"></div>
<div class="t" style="left:1759.2px;top:563.00px;font-size:18.6px;font-family:'DejaVu Sans','Liberation Sans',sans-serif;letter-spacing:-0.235px;color:#172b4d;-webkit-text-stroke-width:0.35px;">Export</div>
<div class="t" style="left:1848.7px;top:562.00px;font-size:19.6px;letter-spacing:0.083px;color:#5e6c84;-webkit-text-stroke-width:0.35px;">AP-13</div>
<svg style="left:0;top:0" width="2048" height="700" fill="none" stroke="#e5843a" stroke-width="2.800" stroke-linecap="round" stroke-linejoin="round"><path d="M1929.8 574.3V560.2M1924.5 565.6L1929.8 560.0L1935.1 565.6"/></svg>
<div class="abs" style="left:1955.4px;top:556px;width:41.3px;height:29.8px;background:#dfe1e6;border-radius:14.9px;"></div>
<div class="abs" style="left:1973.4px;top:570.9px;width:5.8px;height:2.4px;background:#172b4d;border-radius:0.6px;"></div>
<svg style="left:0;top:0" width="2048" height="700" stroke="#6b778c" stroke-width="1.500"><path d="M820.300 661.300h10.400M825.500 656.100v10.400"/></svg>
<div class="t" style="left:844.9px;top:651.00px;font-size:19.6px;letter-spacing:0.255px;color:#7a869a;-webkit-text-stroke-width:0.35px;">Create issue</div>
</main>
<section id="annotation">
<svg style="left:0;top:0;filter:drop-shadow(1.200px 1.600px 1.300px rgba(60,40,40,.45))" width="2048" height="800"><path d="M887.500 609.200Q946.500 621.100 1010.500 678.300" fill="none" stroke="#7d2113" stroke-width="2.800"/><path d="M871.600 606L890 600.700L886.400 617.900z" fill="#7d2113"/></svg>
<div class="t" style="left:1009.2px;top:693.00px;font-size:31px;font-style:italic;font-family:'Liberation Serif','DejaVu Serif',serif;letter-spacing:0.714px;color:#a6311f;-webkit-text-stroke-width:0.7px;transform-origin:0 50%;transform:scaleX(1.2);">Priority</div>
<div class="t" style="left:1146.2px;top:693.00px;font-size:31px;font-style:italic;font-family:'Liberation Serif','DejaVu Serif',serif;letter-spacing:-0.583px;color:#a6311f;-webkit-text-stroke-width:0.7px;transform-origin:0 50%;transform:scaleX(1.2);">score</div>
<div class="t" style="left:1233.3px;top:693.00px;font-size:31px;font-style:italic;font-family:'Liberation Serif','DejaVu Serif',serif;letter-spacing:0.217px;color:#a6311f;-webkit-text-stroke-width:0.7px;transform-origin:0 50%;transform:scaleX(1.2);">will</div>
<div class="t" style="left:1303px;top:693.00px;font-size:31px;font-style:italic;font-family:'Liberation Serif','DejaVu Serif',serif;letter-spacing:1.723px;color:#a6311f;-webkit-text-stroke-width:0.7px;transform-origin:0 50%;transform:scaleX(1.2);">start</div>
<div class="t" style="left:955.4px;top:739.00px;font-size:31px;font-style:italic;font-family:'Liberation Serif','DejaVu Serif',serif;letter-spacing:0.362px;color:#a6311f;-webkit-text-stroke-width:0.7px;transform-origin:0 50%;transform:scaleX(1.2);">appearing</div>
<div class="t" style="left:1124.8px;top:739.00px;font-size:31px;font-style:italic;font-family:'Liberation Serif','DejaVu Serif',serif;letter-spacing:0.333px;color:#a6311f;-webkit-text-stroke-width:0.7px;transform-origin:0 50%;transform:scaleX(1.2);">on</div>
<div class="t" style="left:1172.8px;top:739.00px;font-size:31px;font-style:italic;font-family:'Liberation Serif','DejaVu Serif',serif;letter-spacing:0.271px;color:#a6311f;-webkit-text-stroke-width:0.7px;transform-origin:0 50%;transform:scaleX(1.2);">the</div>
<div class="t" style="left:1231.3px;top:739.00px;font-size:31px;font-style:italic;font-family:'Liberation Serif','DejaVu Serif',serif;letter-spacing:0.865px;color:#a6311f;-webkit-text-stroke-width:0.7px;transform-origin:0 50%;transform:scaleX(1.2);">backlog</div>
<div class="t" style="left:1366.3px;top:739.00px;font-size:31px;font-style:italic;font-family:'Liberation Serif','DejaVu Serif',serif;letter-spacing:-0.049px;color:#a6311f;-webkit-text-stroke-width:0.7px;transform-origin:0 50%;transform:scaleX(1.2);">view</div>
</section>
</div>
</body>
</html>
